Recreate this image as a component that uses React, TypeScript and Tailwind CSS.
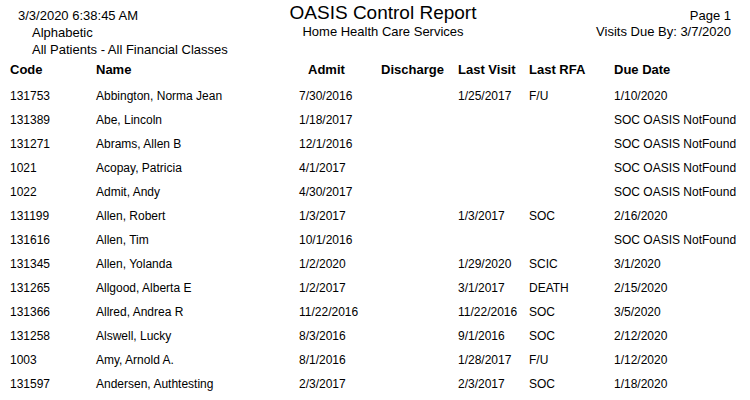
import React from "react";

const rows: string[][] = [
  ["131753", "Abbington, Norma Jean", "7/30/2016", "", "1/25/2017", "F/U", "1/10/2020"],
  ["131389", "Abe, Lincoln", "1/18/2017", "", "", "", "SOC OASIS NotFound"],
  ["131271", "Abrams, Allen B", "12/1/2016", "", "", "", "SOC OASIS NotFound"],
  ["1021", "Acopay, Patricia", "4/1/2017", "", "", "", "SOC OASIS NotFound"],
  ["1022", "Admit, Andy", "4/30/2017", "", "", "", "SOC OASIS NotFound"],
  ["131199", "Allen, Robert", "1/3/2017", "", "1/3/2017", "SOC", "2/16/2020"],
  ["131616", "Allen, Tim", "10/1/2016", "", "", "", "SOC OASIS NotFound"],
  ["131345", "Allen, Yolanda", "1/2/2020", "", "1/29/2020", "SCIC", "3/1/2020"],
  ["131265", "Allgood, Alberta E", "1/2/2017", "", "3/1/2017", "DEATH", "2/15/2020"],
  ["131366", "Allred, Andrea R", "11/22/2016", "", "11/22/2016", "SOC", "3/5/2020"],
  ["131258", "Alswell, Lucky", "8/3/2016", "", "9/1/2016", "SOC", "2/12/2020"],
  ["1003", "Amy, Arnold A.", "8/1/2016", "", "1/28/2017", "F/U", "1/12/2020"],
  ["131597", "Andersen, Authtesting", "2/3/2017", "", "2/3/2017", "SOC", "1/18/2020"],
];

const cols = "grid grid-cols-[86px_203px_82px_77px_71px_85px_1fr]";

export default function App() {
  return (
    <div
      className="w-[750px] h-[400px] overflow-hidden bg-white text-black"
      style={{ fontFamily: '"Liberation Sans", Arial, sans-serif' }}
    >
      <div className="grid grid-cols-[265px_200px_1fr] pl-[18px] pr-[19px]">
        <div className="pt-[7px] text-[13px] leading-[17px] whitespace-nowrap">
          <div>3/3/2020 6:38:45 AM</div>
          <div className="pl-[14px]">Alphabetic</div>
          <div className="pl-[14px]">All Patients - All Financial Classes</div>
        </div>
        <div className="text-center whitespace-nowrap">
          <div className="text-[19px] leading-[25px]">OASIS Control Report</div>
          <div className="text-[13px] leading-[14px]">Home Health Care Services</div>
        </div>
        <div className="pt-[7px] text-right text-[13px] whitespace-nowrap">
          <div className="leading-[17px]">Page 1</div>
          <div className="leading-[16px]">Visits Due By: 3/7/2020</div>
        </div>
      </div>
      <div className={`${cols} pl-[10px] h-[24px] items-center text-[13px] font-bold whitespace-nowrap`}>
        <div>Code</div>
        <div>Name</div>
        <div className="pl-[9px]">Admit</div>
        <div>Discharge</div>
        <div>Last Visit</div>
        <div>Last RFA</div>
        <div>Due Date</div>
      </div>
      <div className="pt-[2px]">
        {rows.map((r, i) => (
          <div
            key={i}
            className={`${cols} pl-[10px] h-[24px] items-center text-[12px] whitespace-nowrap`}
          >
            {r.map((c, j) => (
              <div key={j}>{c}</div>
            ))}
          </div>
        ))}
      </div>
    </div>
  );
}
